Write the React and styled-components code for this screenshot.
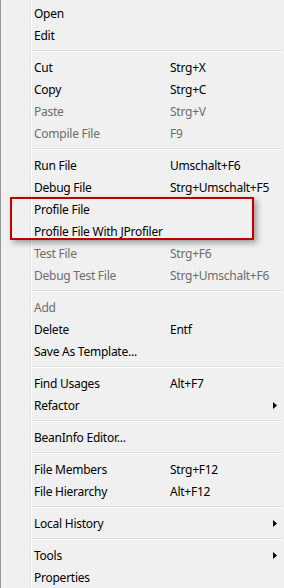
import { createGlobalStyle, styled } from "styled-components";

const GlobalStyle = createGlobalStyle`
  html, body {
    margin: 0;
    padding: 0;
    background: #f0f0f0;
  }
  body {
    font-family: "Noto Sans", "Open Sans", "Liberation Sans", sans-serif;
    font-size: 12px;
    letter-spacing: -0.25px;
    color: #000;
  }
`;

// menu groups, separators drawn between them
const groups = [
  [{ label: "Open" }, { label: "Edit" }],
  [
    { label: "Cut", key: "Strg+X" },
    { label: "Copy", key: "Strg+C" },
    { label: "Paste", key: "Strg+V", disabled: true },
    { label: "Compile File", key: "F9", disabled: true },
  ],
  [
    { label: "Run File", key: "Umschalt+F6" },
    { label: "Debug File", key: "Strg+Umschalt+F5" },
    { label: "Profile File", mark: true },
    { label: "Profile File With JProfiler", mark: true },
    { label: "Test File", key: "Strg+F6", disabled: true },
    { label: "Debug Test File", key: "Strg+Umschalt+F6", disabled: true },
  ],
  [
    { label: "Add", disabled: true },
    { label: "Delete", key: "Entf" },
    { label: "Save As Template..." },
  ],
  [{ label: "Find Usages", key: "Alt+F7" }, { label: "Refactor", sub: true }],
  [{ label: "BeanInfo Editor..." }],
  [
    { label: "File Members", key: "Strg+F12" },
    { label: "File Hierarchy", key: "Alt+F12" },
  ],
  [{ label: "Local History", sub: true }],
  [{ label: "Tools", sub: true }, { label: "Properties" }],
];

const Item = ({ item }) => (
  <Row $disabled={item.disabled}>
    <Label>{item.label}</Label>
    <Shortcut>{item.key}</Shortcut>
    <Arrow>{item.sub && <ArrowIcon />}</Arrow>
  </Row>
);

const ArrowIcon = () => (
  <svg width="4" height="7" viewBox="0 0 4 7">
    <path d="M0 0 L4 3.5 L0 7 Z" fill="#000" />
  </svg>
);

const renderGroup = (items) => {
  const out = [];
  let i = 0;
  while (i < items.length) {
    if (items[i].mark) {
      const marked = [];
      while (i < items.length && items[i].mark) marked.push(items[i++]);
      out.push(
        <Marked key={"m" + i}>
          {marked.map((it) => (
            <Item key={it.label} item={it} />
          ))}
        </Marked>
      );
    } else {
      out.push(<Item key={items[i].label} item={items[i]} />);
      i++;
    }
  }
  return out;
};

const App = () => {
  return (
    <>
      <GlobalStyle />
      <Menu>
        {groups.map((g, gi) => (
          <Group key={gi}>
            {gi > 0 && <Separator />}
            {renderGroup(g)}
          </Group>
        ))}
      </Menu>
    </>
  );
};

const Menu = styled.div`
  width: 284px;
  height: 588px;
  box-sizing: border-box;
  overflow: hidden;
  padding-top: 2px;
  border-left: 1px solid #979797;
  display: flex;
  flex-direction: column;
  /* icon gutter line */
  background: linear-gradient(
    to right,
    #f0f0f0 0,
    #f0f0f0 29px,
    #e2e3e3 29px,
    #e2e3e3 30px,
    #ffffff 30px,
    #ffffff 31px,
    #f0f0f0 31px
  );
`;

const Group = styled.div`
  display: flex;
  flex-direction: column;
`;

const Row = styled.div`
  height: 22px;
  display: grid;
  grid-template-columns: 136px 1fr 8px;
  align-items: center;
  padding-left: 33px;
  padding-right: 3px;
  color: ${(p) => (p.$disabled ? "#6d6d6d" : "#000")};
  white-space: nowrap;
`;

const Label = styled.span`
  line-height: 22px;
  padding-top: 1px;
`;

const Shortcut = styled.span`
  line-height: 22px;
  padding-top: 1px;
`;

const Arrow = styled.span`
  display: flex;
  align-items: center;
`;

const Separator = styled.div`
  height: 10px;
  margin-left: 29px;
  margin-right: 2px;
  box-sizing: border-box;
  padding-top: 4px;
  &::before {
    content: "";
    display: block;
    height: 1px;
    background: #e0e0e0;
    border-bottom: 1px solid #ffffff;
  }
`;

// red annotation frame drawn over the profile entries
const Marked = styled.div`
  position: relative;
  &::after {
    content: "";
    position: absolute;
    left: 9px;
    top: -1px;
    width: 244px;
    height: 43px;
    box-sizing: border-box;
    border: 2px solid #c00000;
    box-shadow: 3px 3px 6px rgba(0, 0, 0, 0.35);
    pointer-events: none;
  }
`;

export default App;
